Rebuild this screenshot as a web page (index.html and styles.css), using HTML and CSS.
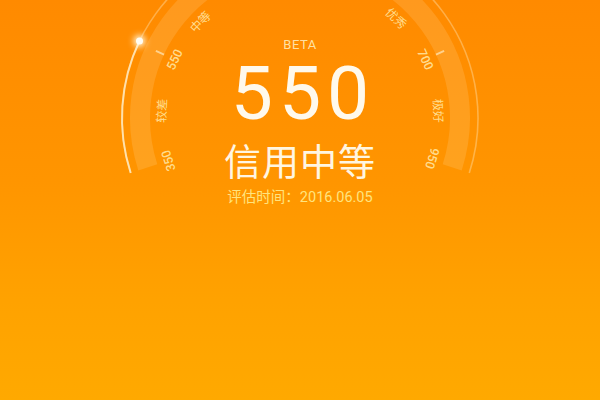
FILE: index.html
```html
<!DOCTYPE html>
<html lang="zh-CN">
<head>
<meta charset="utf-8">
<title>芝麻信用</title>
<link rel="stylesheet" href="styles.css">
</head>
<body>
<div class="screen">
  <svg class="gauge" viewBox="0 0 600 400" width="600" height="400" aria-hidden="true">
    <defs>
      <filter id="glow" x="-2" y="-2" width="5" height="5">
        <feGaussianBlur stdDeviation="3"/>
      </filter>
    </defs>
    <path class="band" d="M147.8 167.4 A160 160 0 1 1 452.2 167.4"/>
    <path class="rim" d="M130.7 173 A178 178 0 1 1 469.3 173"/>
    <path class="rim-on" d="M130.7 173 A178 178 0 0 1 139.5 41"/>
    <g class="ticks">
      <line x1="300" y1="-32" x2="300" y2="-41" transform="rotate(-65 300 118)"/>
      <line x1="300" y1="-32" x2="300" y2="-41" transform="rotate(65 300 118)"/>
    </g>
    <g class="labels">
      <text x="300" y="-16" transform="rotate(-108 300 118)">350</text>
      <text x="300" y="-16" transform="rotate(-87 300 118)" class="cn">较差</text>
      <text x="300" y="-16" transform="rotate(-65 300 118)">550</text>
      <text x="300" y="-16" transform="rotate(-46 300 118)" class="cn">中等</text>
      <text x="300" y="-16" transform="rotate(44 300 118)" class="cn">优秀</text>
      <text x="300" y="-16" transform="rotate(65 300 118)">700</text>
      <text x="300" y="-16" transform="rotate(87 300 118)" class="cn">极好</text>
      <text x="300" y="-16" transform="rotate(107 300 118)">950</text>
    </g>
    <circle class="dot-glow" cx="139.5" cy="41" r="6" filter="url(#glow)"/>
    <circle class="dot" cx="139.5" cy="41" r="3.5"/>
  </svg>

  <main class="score">
    <div class="beta">BETA</div>
    <div class="value">550</div>
    <div class="level">信用中等</div>
    <div class="date">评估时间：2016.06.05</div>
  </main>
</div>
</body>
</html>
```

FILE: styles.css
```css
* { box-sizing: border-box; }

html, body {
  margin: 0;
  padding: 0;
}

body {
  width: 600px;
  height: 400px;
  overflow: hidden;
  font-family: Roboto, "Noto Sans CJK SC", sans-serif;
}

.screen {
  position: relative;
  width: 600px;
  height: 400px;
  background: linear-gradient(180deg, #ff8a00 0%, #ff9500 45%, #ffa200 75%, #ffa900 100%);
  overflow: hidden;
}

.gauge {
  position: absolute;
  left: 0;
  top: 0;
}

.band {
  fill: none;
  stroke: rgba(255, 240, 200, 0.15);
  stroke-width: 20;
}

.rim {
  fill: none;
  stroke: rgba(255, 235, 190, 0.38);
  stroke-width: 1.6;
}

.rim-on {
  fill: none;
  stroke: rgba(255, 245, 215, 0.7);
  stroke-width: 2;
}

.ticks line {
  stroke: rgba(255, 245, 215, 0.6);
  stroke-width: 2;
}

.labels text {
  font-family: Roboto, sans-serif;
  font-size: 12.5px;
  font-weight: 500;
  fill: rgba(255, 230, 160, 0.9);
  text-anchor: middle;
}

.labels text.cn {
  font-family: "Noto Sans CJK SC", sans-serif;
  font-size: 12px;
  font-weight: 400;
}

.dot { fill: #fffdf5; }
.dot-glow { fill: rgba(255, 255, 240, 0.9); }

.score {
  position: relative;
  display: flex;
  flex-direction: column;
  align-items: center;
  padding-top: 38px;
}

.beta {
  font-size: 13px;
  line-height: 14px;
  letter-spacing: 0.5px;
  color: rgba(255, 236, 185, 0.9);
}

.value {
  margin-top: 4px;
  font-size: 75px;
  line-height: 74px;
  font-weight: 400;
  letter-spacing: 6px;
  padding-left: 6px;
  color: #fff9ec;
}

.level {
  margin-top: 10px;
  font-family: "Noto Sans CJK SC", sans-serif;
  font-size: 37px;
  line-height: 40px;
  font-weight: 400;
  letter-spacing: 1px;
  color: #fff6e2;
}

.date {
  margin-top: 10px;
  font-family: Roboto, "Noto Sans CJK SC", sans-serif;
  font-size: 14.5px;
  line-height: 16px;
  color: #ffe47e;
}
```
